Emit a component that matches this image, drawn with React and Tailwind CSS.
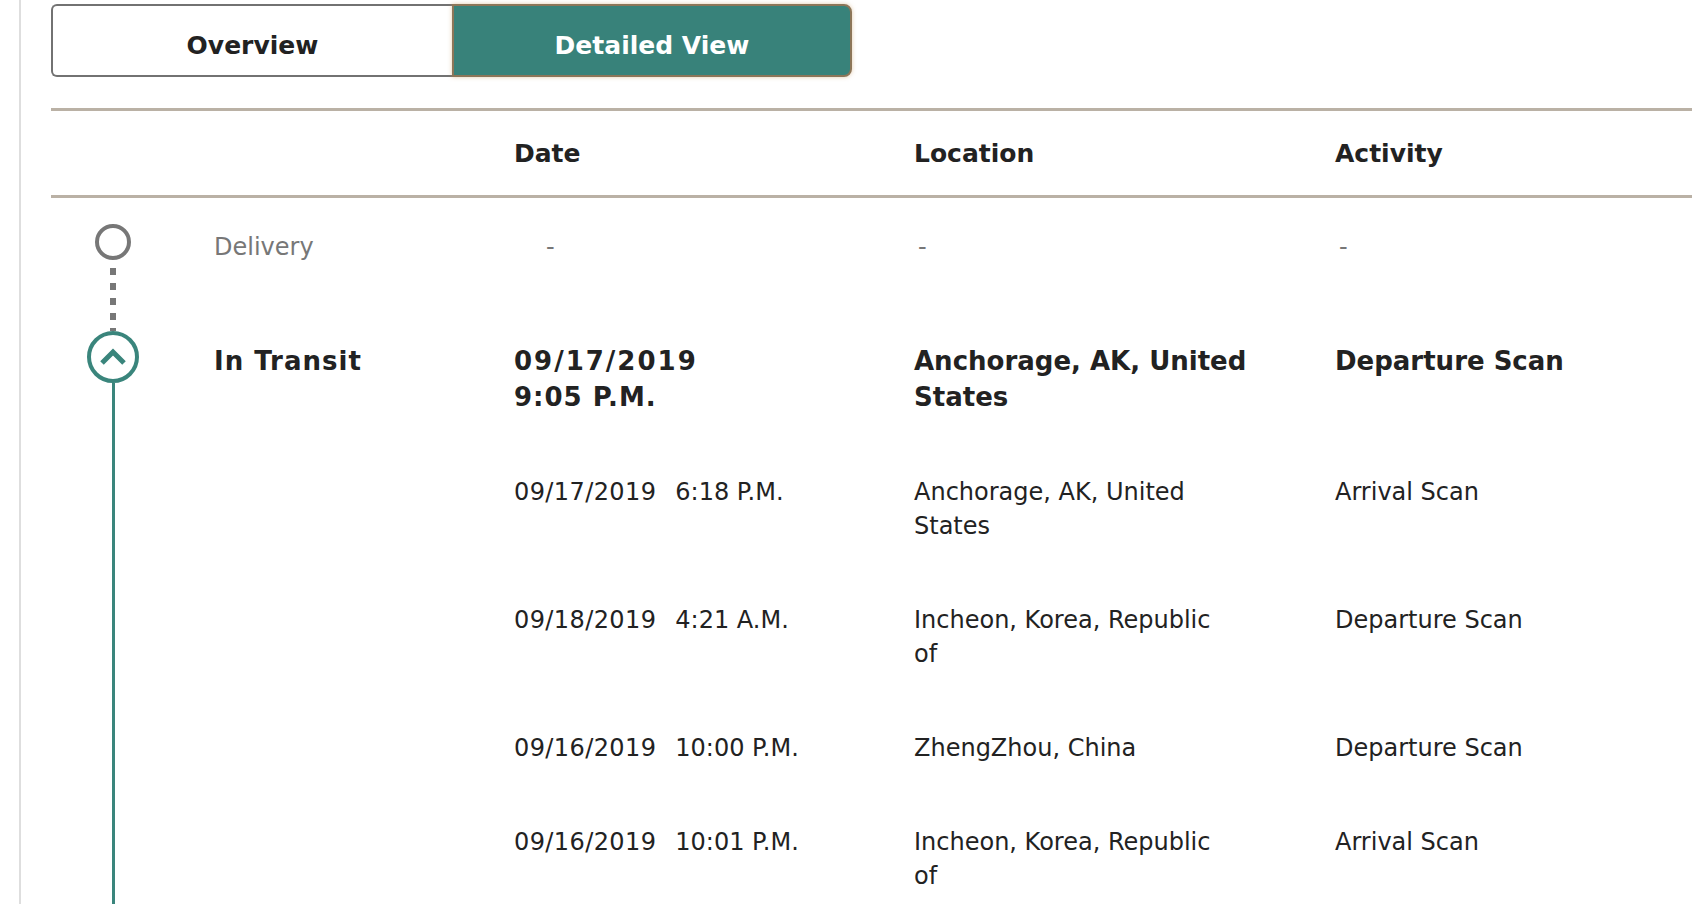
import React from 'react';

const teal = 'bg-[#3a857c]';

const details = [
    { date: '09/17/2019', time: '6:18 P.M.', location: 'Anchorage, AK, United States', activity: 'Arrival Scan' },
    { date: '09/18/2019', time: '4:21 A.M.', location: 'Incheon, Korea, Republic of', activity: 'Departure Scan' },
    { date: '09/16/2019', time: '10:00 P.M.', location: 'ZhengZhou, China', activity: 'Departure Scan' },
    { date: '09/16/2019', time: '10:01 P.M.', location: 'Incheon, Korea, Republic of', activity: 'Arrival Scan' },
];

const cols = 'grid grid-cols-[124px_339px_400px_421px_1fr]';

const Tabs = () => (
    <div className="flex">
        <button className="w-[401px] h-[73px] flex items-center justify-center pt-[10px] border-2 border-r-0 border-[#727272] rounded-l-[6px] bg-white text-[25px] font-bold text-[#222]">
            Overview
        </button>
        <button className="w-[400px] h-[73px] flex items-center justify-center pt-[10px] border-2 border-[#8c7659] rounded-r-[8px] bg-[#38827a] text-[25px] font-bold text-white shadow-[0_0_4px_rgba(200,150,90,0.5)]">
            Detailed View
        </button>
    </div>
);

const App = () => {
    return (
        <div className="min-h-screen bg-white ml-[19px] border-l-2 border-[#dedede] pl-[30px] pt-[4px] font-['DejaVu_Sans',Verdana,sans-serif] text-[#222] overflow-hidden">
            <Tabs />

            {/* header */}
            <div className={`${cols} mt-[31px] h-[90px] items-center pt-[2px] border-y-[3px] border-[#bab1a5] text-[25px] font-bold`}>
                <div />
                <div />
                <div>Date</div>
                <div>Location</div>
                <div>Activity</div>
            </div>

            {/* delivery (pending) */}
            <div className={`${cols} text-[24px] leading-[34px]`}>
                <div className="flex flex-col items-center pt-[26px]">
                    <div className="w-[36px] h-[36px] rounded-full border-4 border-[#777]" />
                    <div className="flex-1 w-[6px] bg-[repeating-linear-gradient(to_bottom,transparent_0px,transparent_8px,#777_8px,#777_15px)]" />
                </div>
                <div className="pl-[39px] pt-[32px] pb-[67px] text-[#777]">Delivery</div>
                <div className="pl-[32px] pt-[32px] text-[#777]">-</div>
                <div className="pl-[4px] pt-[32px] text-[#777]">-</div>
                <div className="pl-[4px] pt-[32px] text-[#777]">-</div>
            </div>

            {/* in transit, latest event */}
            <div className={`${cols} text-[26px] leading-[36px] font-bold`}>
                <div className="flex flex-col items-center">
                    <div className="w-[52px] h-[52px] rounded-full border-4 border-[#3a857c] flex items-center justify-center">
                        <svg width="30" height="30" viewBox="0 0 30 30" fill="none">
                            <polyline points="4,21 15,10 26,21" stroke="#3a857c" strokeWidth="5" />
                        </svg>
                    </div>
                    <div className={`flex-1 w-[3px] ${teal}`} />
                </div>
                <div className="pl-[39px] pt-[12px] tracking-[1px]">In Transit</div>
                <div className="pt-[12px]">
                    <div className="tracking-[2px]">09/17/2019</div>
                    <div className="tracking-[1px]">9:05 P.M.</div>
                </div>
                <div className="pt-[12px]">
                    <div className="w-[345px]">Anchorage, AK, United States</div>
                </div>
                <div className="pt-[12px]">Departure Scan</div>
            </div>

            {details.map((row, i) => (
                <div key={i} className={`${cols} text-[24px] leading-[34px]`}>
                    <div className="flex justify-center">
                        <div className={`w-[3px] ${teal}`} />
                    </div>
                    <div />
                    <div className="pt-[60px]">
                        <span className="tracking-[0.4px]">{row.date}</span>
                        <span className="ml-[19px]">{row.time}</span>
                    </div>
                    <div className="pt-[60px]">
                        <div className="w-[320px]">{row.location}</div>
                    </div>
                    <div className="pt-[60px]">{row.activity}</div>
                </div>
            ))}
            <div className={cols}>
                <div className="flex justify-center h-[80px]">
                    <div className={`w-[3px] ${teal}`} />
                </div>
            </div>
        </div>
    );
};

export default App;
